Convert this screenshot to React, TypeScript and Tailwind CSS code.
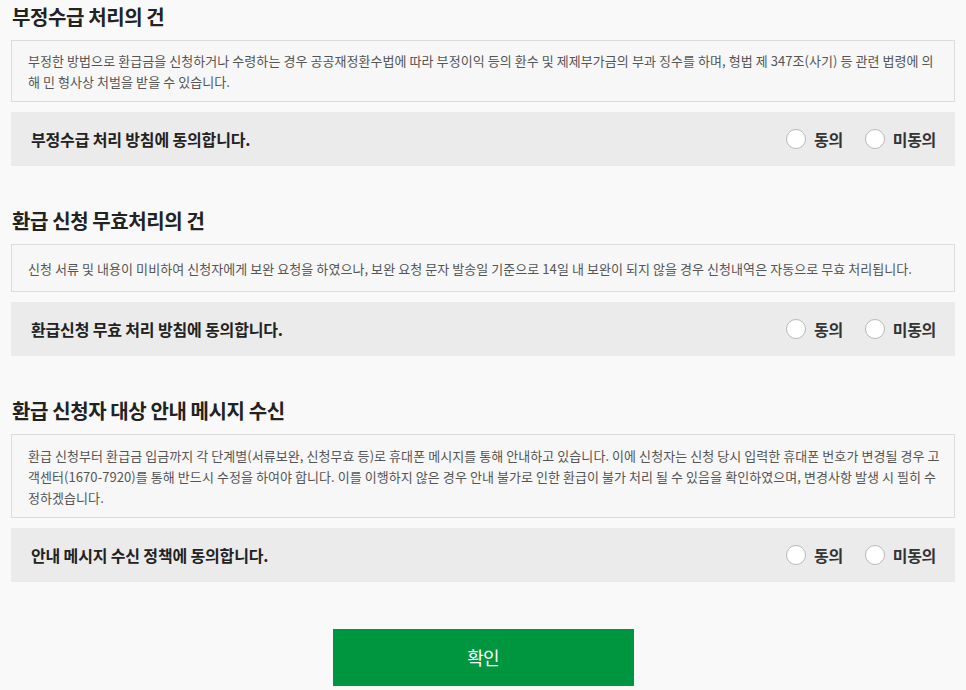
import { useState } from "react";

type Section = {
    title: string,
    lines: string[],
    agreeText: string,
    boxPadding: string,
}

const sections: Section[] = [
    {
        title: "부정수급 처리의 건",
        lines: [
            "부정한 방법으로 환급금을 신청하거나 수령하는 경우 공공재정환수법에 따라 부정이익 등의 환수 및 제제부가금의 부과 징수를 하며, 형법 제 347조(사기) 등 관련 법령에 의해 민 형사상 처벌을 받을 수 있습니다.",
        ],
        agreeText: "부정수급 처리 방침에 동의합니다.",
        boxPadding: "py-[9px] pr-3",
    },
    {
        title: "환급 신청 무효처리의 건",
        lines: [
            "신청 서류 및 내용이 미비하여 신청자에게 보완 요청을 하였으나, 보완 요청 문자 발송일 기준으로 14일 내 보완이 되지 않을 경우 신청내역은 자동으로 무효 처리됩니다.",
        ],
        agreeText: "환급신청 무효 처리 방침에 동의합니다.",
        boxPadding: "py-[12.5px] pr-2",
    },
    {
        title: "환급 신청자 대상 안내 메시지 수신",
        lines: [
            "환급 신청부터 환급금 입금까지 각 단계별(서류보완, 신청무효 등)로 휴대폰 메시지를 통해 안내하고 있습니다. 이에 신청자는 신청 당시 입력한 휴대폰 번호가 변경될 경우 고객센터(1670-7920)를 통해 반드시 수정을 하여야 합니다. 이를 이행하지 않은 경우 안내 불가로 인한 환급이 불가 처리 될 수 있음을 확인하였으며, 변경사항 발생 시 필히 수정하겠습니다.",
        ],
        agreeText: "안내 메시지 수신 정책에 동의합니다.",
        boxPadding: "pt-[10px] pb-[9px] pr-2",
    },
]

type RadioProps = {
    label: string,
    checked: boolean,
    onSelect: () => void,
}

const Radio = ({ label, checked, onSelect }: RadioProps) => {
    return (
        <button type="button" onClick={onSelect} className="flex items-center gap-2">
            <span className="w-5 h-5 rounded-full border border-[#b9b9b9] bg-white flex items-center justify-center">
                {checked && <span className="w-2.5 h-2.5 rounded-full bg-[#00963f]" />}
            </span>
            <span className="text-[16px] font-bold text-[#333] tracking-[-0.02em]">{label}</span>
        </button>
    )
}

const App = () => {
    const [answers, setAnswers] = useState<(string | null)[]>([null, null, null])

    const choose = (index: number, value: string) => {
        const next = [...answers]
        next[index] = value
        setAnswers(next)
    }

    return (
        <div className="min-h-screen bg-[#f9f9f9] px-[11px] pt-[3px] font-['Noto_Sans_CJK_KR','Noto_Sans',sans-serif]">
            {sections.map((section, i) => (
                <div key={section.title} className={i === 0 ? "" : "mt-[41px]"}>
                    <h2 className="text-[20px] leading-[28px] font-bold text-[#222] tracking-[-0.02em] pl-px mb-[9px]">
                        {section.title}
                    </h2>
                    <div className={`border border-[#dcdcdc] bg-[#f7f7f7] pl-4 ${section.boxPadding} text-[13px] leading-[21px] text-[#555] tracking-[0.005em]`}>
                        {section.lines.map((line) => (
                            <p key={line}>{line}</p>
                        ))}
                    </div>
                    <div className="mt-[10px] h-[54px] bg-[#ebebeb] flex items-center justify-between pl-5 pr-[19px]">
                        <span className="text-[16px] font-bold text-[#222] tracking-[-0.01em]">
                            {section.agreeText}
                        </span>
                        <div className="flex items-center gap-[22px]">
                            <Radio label="동의" checked={answers[i] === "yes"} onSelect={() => choose(i, "yes")} />
                            <Radio label="미동의" checked={answers[i] === "no"} onSelect={() => choose(i, "no")} />
                        </div>
                    </div>
                </div>
            ))}

            <div className="flex justify-center mt-[47px]">
                <button type="button" className="w-[301px] h-[57px] bg-[#00963f] text-white text-[18px] tracking-[-0.04em]">
                    확인
                </button>
            </div>
        </div>
    )
}

export default App
